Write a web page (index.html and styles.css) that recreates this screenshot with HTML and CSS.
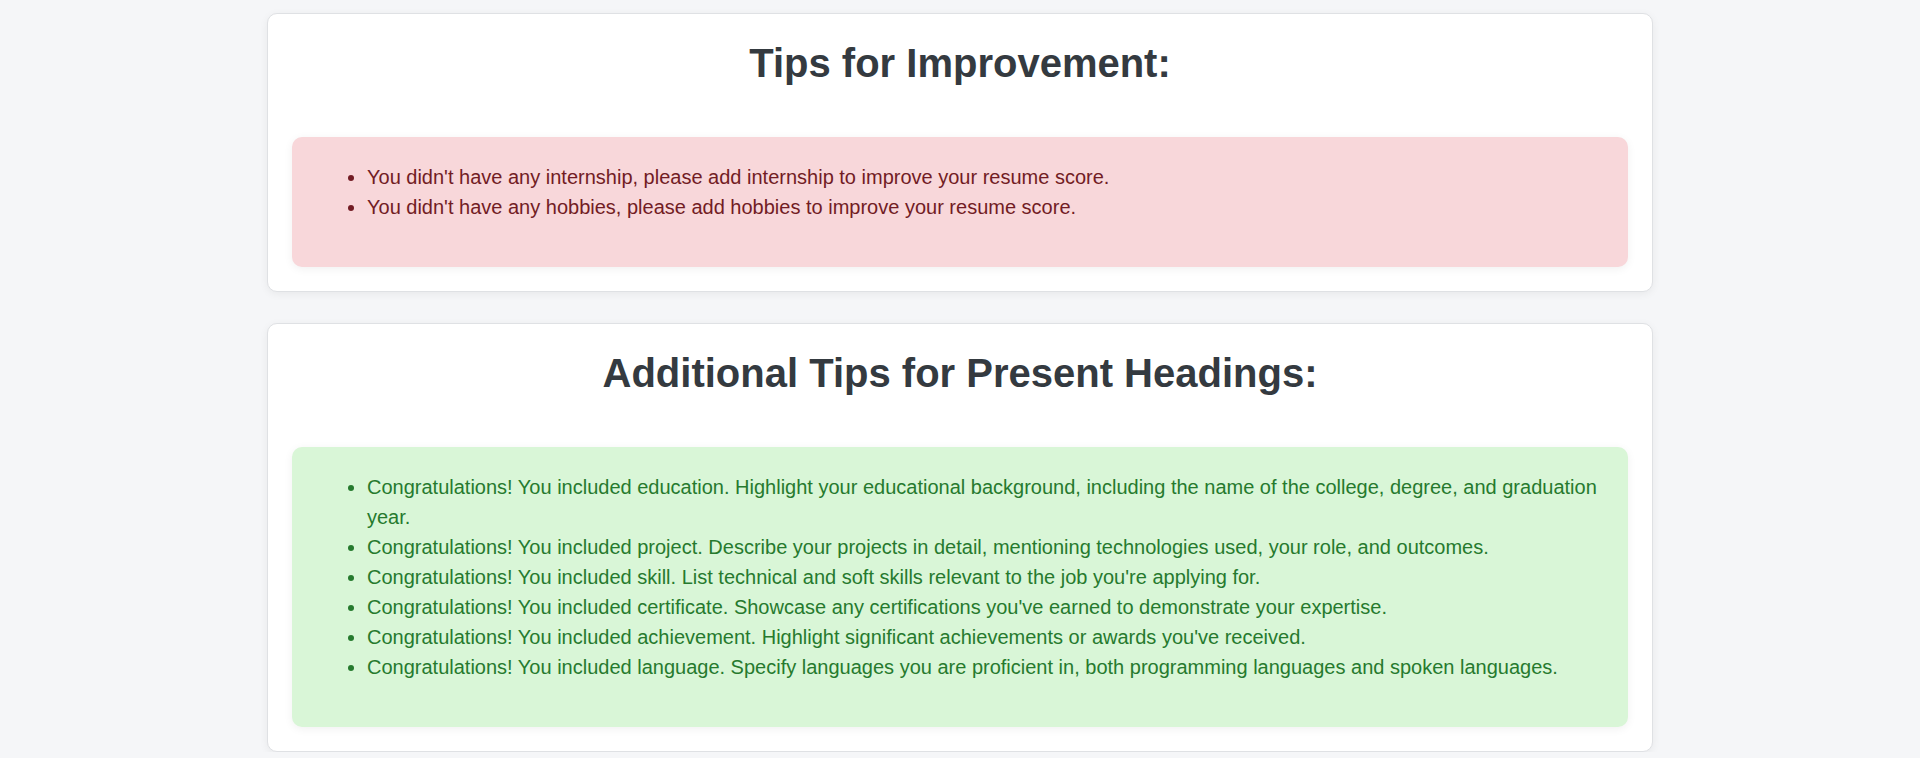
FILE: index.html
```html
<!DOCTYPE html>
<html lang="en">
<head>
<meta charset="utf-8">
<title>Resume Tips</title>
<link rel="stylesheet" href="styles.css">
</head>
<body>
<main class="container">
  <section class="card">
    <h2 class="card-title">Tips for Improvement:</h2>
    <div class="alert alert-danger">
      <ul class="tip-list">
        <li>You didn't have any internship, please add internship to improve your resume score.</li>
        <li>You didn't have any hobbies, please add hobbies to improve your resume score.</li>
      </ul>
    </div>
  </section>
  <section class="card">
    <h2 class="card-title">Additional Tips for Present Headings:</h2>
    <div class="alert alert-success">
      <ul class="tip-list">
        <li>Congratulations! You included education. Highlight your educational background, including the name of the college, degree, and graduation year.</li>
        <li>Congratulations! You included project. Describe your projects in detail, mentioning technologies used, your role, and outcomes.</li>
        <li>Congratulations! You included skill. List technical and soft skills relevant to the job you're applying for.</li>
        <li>Congratulations! You included certificate. Showcase any certifications you've earned to demonstrate your expertise.</li>
        <li>Congratulations! You included achievement. Highlight significant achievements or awards you've received.</li>
        <li>Congratulations! You included language. Specify languages you are proficient in, both programming languages and spoken languages.</li>
      </ul>
    </div>
  </section>
</main>
</body>
</html>
```

FILE: styles.css
```css
* {
  box-sizing: border-box;
}

html, body {
  margin: 0;
  padding: 0;
}

body {
  background: #f5f6f8;
  font-family: "Liberation Sans", Arial, sans-serif;
  color: #343a40;
}

.container {
  max-width: 1386px;
  margin: 0 auto;
  padding-top: 13px;
  display: flex;
  flex-direction: column;
  gap: 31px;
}

.card {
  background: #ffffff;
  border: 1px solid #dfe1e4;
  border-radius: 10px;
  box-shadow: 0 2px 8px rgba(0, 0, 0, 0.06);
  padding: 24px;
}

.card-title {
  margin: 0 0 49px;
  font-size: 40px;
  line-height: 50px;
  font-weight: 700;
  text-align: center;
  color: #343a40;
}

.alert {
  border-radius: 10px;
  padding: 25px 24px 24px;
  box-shadow: 0 2px 10px rgba(0, 0, 0, 0.06);
}

.alert-danger {
  background: #f8d7da;
  color: #721c24;
}

.alert-success {
  background: #d9f6d7;
  color: #267a2e;
}

.tip-list {
  margin: 0 0 21px;
  padding-left: 51px;
  font-size: 20px;
  line-height: 30px;
}
```
